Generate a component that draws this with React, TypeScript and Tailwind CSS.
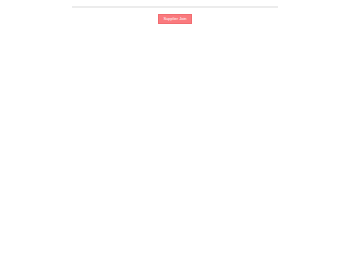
export default function App() {
  return (
    <div className="min-h-[262px] bg-white" style={{ fontFamily: "'Liberation Sans', Arial, sans-serif" }}>
      <div className="mx-auto w-[206px] pt-[6px]">
        <div className="h-[2px] bg-[#ececec]" />
        <div className="flex justify-center pt-[6px]">
          <button className="h-[10px] w-[34px] bg-[#fa7a7e] text-white text-[4px] leading-[8px] border border-[#f26c70]">
            Supplier Join
          </button>
        </div>
      </div>
    </div>
  );
}
